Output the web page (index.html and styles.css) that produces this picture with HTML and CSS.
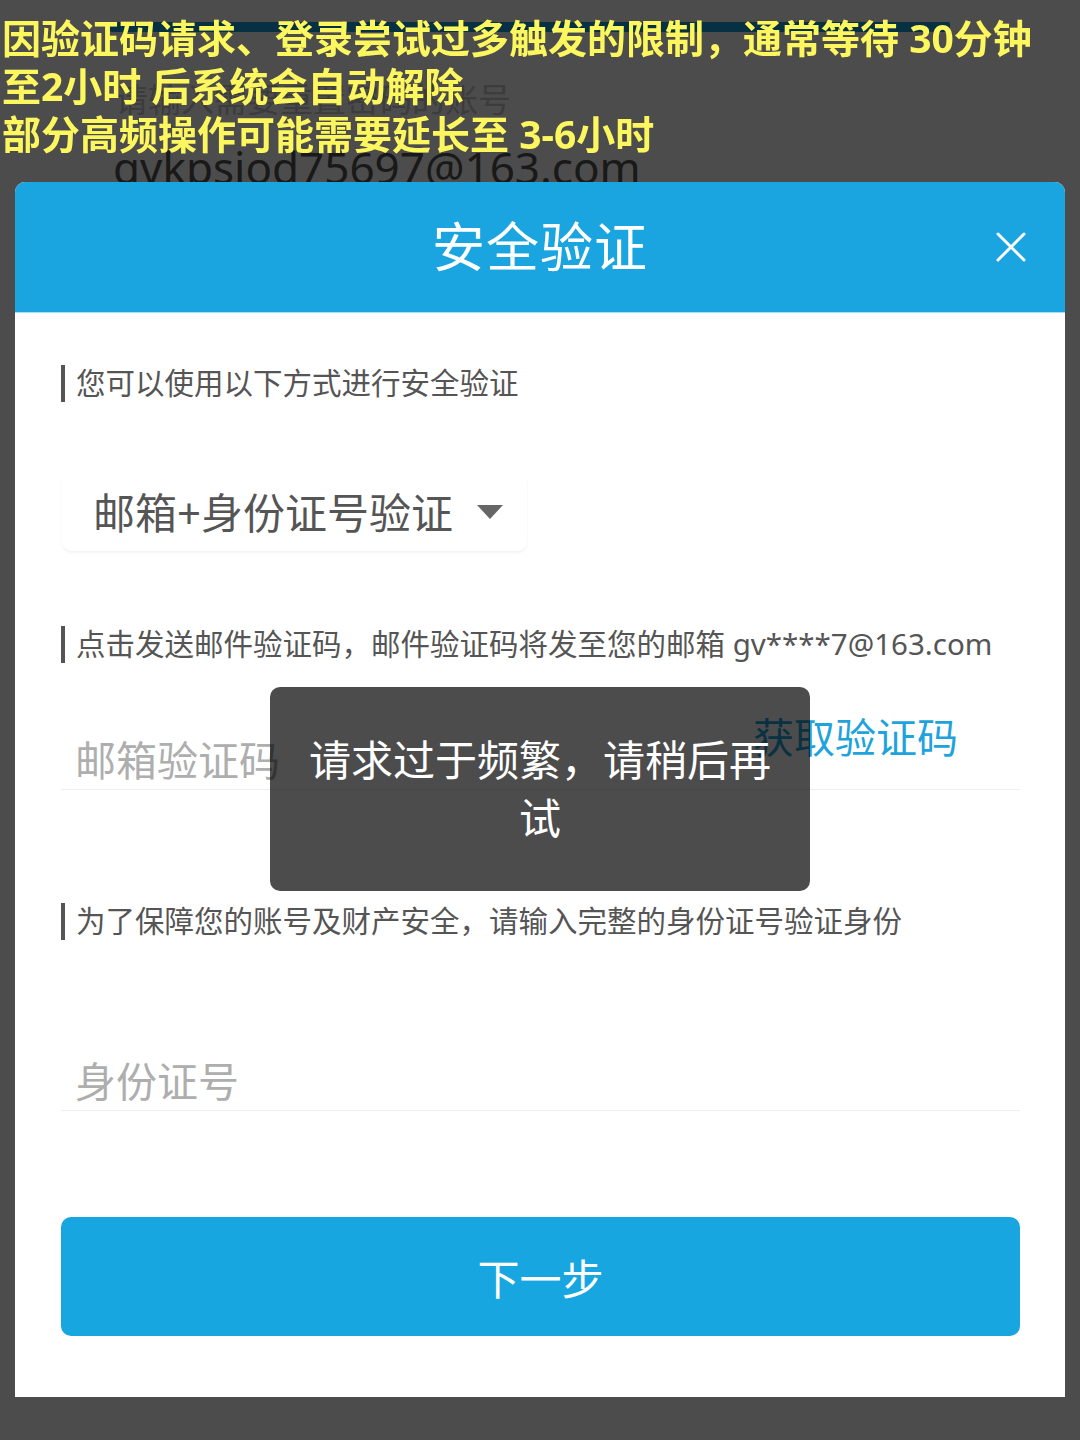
FILE: index.html
```html
<!DOCTYPE html>
<html lang="zh-CN">
<head>
  <meta charset="UTF-8" />
  <meta name="viewport" content="width=device-width, initial-scale=1.0"/>
  <title>安全验证</title>
  <link rel="stylesheet" href="styles.css">
</head>
<body>

<!-- Page under the mask -->
<div class="behind">
  <div class="behind-bar"></div>
  <div class="behind-hint">请输入需要重置密码的账号</div>
  <div class="behind-account">gvkpsjod75697@163.com</div>
</div>

<div class="mask"></div>

<!-- Annotation -->
<div class="notice">
  因验证码请求、登录尝试过多触发的限制，通常等待 30分钟<br>
  至2小时 后系统会自动解除<br>
  部分高频操作可能需要延长至 3-6小时
</div>

<!-- Modal -->
<div class="modal">
  <div class="modal-header">
    <h2>安全验证</h2>
    <button class="close-btn" aria-label="关闭">
      <svg width="30" height="30" viewBox="0 0 30 30">
        <path d="M2 2 L28 28 M28 2 L2 28" stroke="#fff" stroke-width="3" stroke-linecap="round" fill="none"/>
      </svg>
    </button>
  </div>

  <div class="modal-body">
    <div class="label"><span class="label-bar"></span><span>您可以使用以下方式进行安全验证</span></div>

    <div class="select">
      <span>邮箱+身份证号验证</span>
      <svg width="26" height="14" viewBox="0 0 26 14"><path d="M0 0 H26 L13 14 Z" fill="#666"/></svg>
    </div>

    <div class="label label-mail"><span class="label-bar"></span><span>点击发送邮件验证码，邮件验证码将发至您的邮箱 gv****7@163.com</span></div>

    <div class="field field-code">
      <span class="placeholder">邮箱验证码</span>
      <a href="#" class="get-code">获取验证码</a>
    </div>

    <div class="label label-id"><span class="label-bar"></span><span>为了保障您的账号及财产安全，请输入完整的身份证号验证身份</span></div>

    <div class="field field-id">
      <span class="placeholder">身份证号</span>
    </div>

    <button class="btn-next">下一步</button>
  </div>

  <div class="toast">请求过于频繁，请稍后再试</div>
</div>

</body>
</html>
```

FILE: styles.css
```css
body {
  font-family: "Noto Sans", "Noto Sans CJK SC", sans-serif;
  margin: 0;
  background-color: #fff;
  height: 1440px;
  overflow: hidden;
}

/* page under the mask */
.behind {
  padding: 22px 0 0 110px;
}

.behind-bar {
  width: 840px;
  height: 10px;
  background-color: #1aa5e0;
  border-radius: 2px;
}

.behind-hint {
  margin: 45px 0 0 5px;
  font-size: 33px;
  line-height: 46px;
  color: #c8c8c8;
}

.behind-account {
  margin: 14px 0 0 3px;
  font-size: 44px;
  line-height: 60px;
  color: #555;
}

.mask {
  position: fixed;
  top: 0; left: 0; right: 0; bottom: 0;
  background-color: rgba(0,0,0,0.7);
}

.notice {
  position: absolute;
  top: 14px;
  left: 2px;
  font-size: 39px;
  line-height: 48px;
  font-weight: bold;
  color: #fcf75e;
  white-space: nowrap;
}

/* modal */
.modal {
  position: absolute;
  top: 182px;
  left: 15px;
  width: 1050px;
  background: #fff;
  border-radius: 10px 10px 0 0;
}

.modal-header {
  height: 131px;
  background-color: #1aa5e0;
  border-radius: 10px 10px 0 0;
  border-bottom: 1px solid #a9dff6;
  box-sizing: border-box;
  display: flex;
  align-items: center;
  justify-content: center;
  position: relative;
}

.modal-header h2 {
  margin: -5px 0 0 0;
  font-size: 53px;
  font-weight: normal;
  color: #fff;
  letter-spacing: 1px;
}

.close-btn {
  position: absolute;
  right: 39px;
  top: 50px;
  background: none;
  border: none;
  padding: 0;
  width: 30px;
  height: 30px;
  cursor: pointer;
}

.modal-body {
  padding: 0 45px 61px 46px;
  display: flex;
  flex-direction: column;
}

.label {
  margin-top: 52px;
  display: flex;
  align-items: center;
  gap: 11px;
  font-size: 29.5px;
  line-height: 37px;
  color: #555;
  white-space: nowrap;
}

.label span:last-child {
  margin-top: -3px;
}

.label-bar {
  width: 4px;
  height: 37px;
  background-color: #555;
}

.label-mail {
  margin-top: 75px;
}

.label-id {
  margin-top: 113px;
}

.select {
  margin-top: 68px;
  margin-left: 1px;
  width: 465px;
  height: 81px;
  box-sizing: border-box;
  padding: 0 24px 0 31px;
  display: flex;
  align-items: center;
  justify-content: space-between;
  border-radius: 10px;
  box-shadow: 0 2px 3px rgba(0,0,0,0.05);
  font-size: 42px;
  color: #555;
}

.select svg {
  margin-top: 2px;
}

.field {
  display: flex;
  align-items: flex-end;
  justify-content: space-between;
  padding-left: 14px;
  border-bottom: 1px solid #efefef;
}

.field-code {
  height: 127px;
  box-sizing: border-box;
}

.field-id {
  height: 171px;
  box-sizing: border-box;
}

.placeholder {
  font-size: 41px;
  line-height: 58px;
  color: #aeaeae;
}

.get-code {
  font-size: 41px;
  line-height: 58px;
  color: #1ea3dc;
  text-decoration: none;
  margin: 0 62px 23px 0;
}

.btn-next {
  margin-top: 106px;
  height: 119px;
  border: none;
  border-radius: 10px;
  background-color: #18a6e0;
  color: #fff;
  font-family: inherit;
  font-size: 42px;
  cursor: pointer;
}

.toast {
  position: absolute;
  left: 255px;
  top: 505px;
  width: 540px;
  height: 204px;
  box-sizing: border-box;
  padding: 0 35px;
  display: flex;
  align-items: center;
  justify-content: center;
  text-align: center;
  background-color: rgba(0,0,0,0.7);
  border-radius: 10px;
  color: #fff;
  font-size: 42px;
  line-height: 58px;
}
```
